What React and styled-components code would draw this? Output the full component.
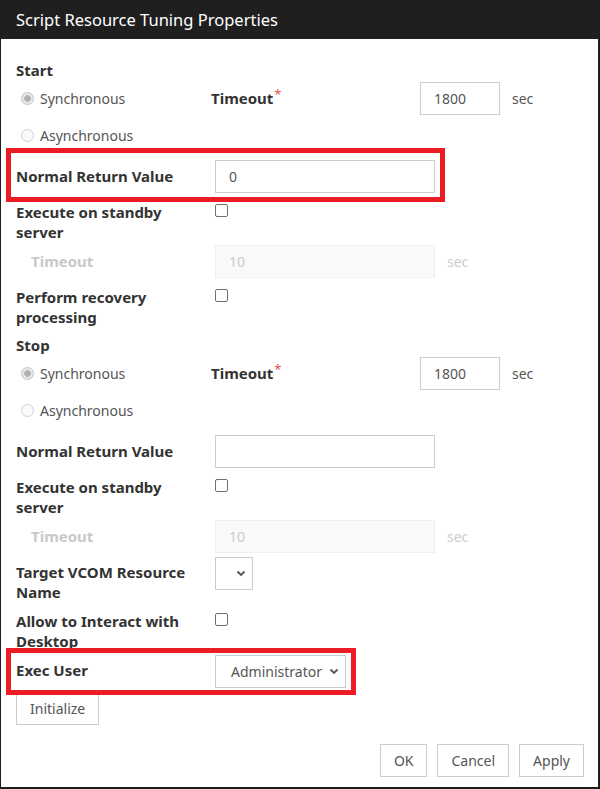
import React from 'react';
import styled, {createGlobalStyle} from "styled-components";

const GlobalStyle = createGlobalStyle`
  html, body {
    margin: 0;
    padding: 0;
    background: #ffffff;
  }
  body {
    font-family: "Noto Sans", "Open Sans", Arial, sans-serif;
    font-size: 14px;
    color: #555555;
  }
`;

const Chevron = () => (
    <svg width="10" height="7" viewBox="0 0 10 7">
        <path d="M1.5 1.5 L5 5 L8.5 1.5" fill="none" stroke="#555" strokeWidth="1.8"/>
    </svg>
);

const Radio = ({checked, label}) => (
    <RadioCell>
        <RadioDot checked={checked}/>
        <RadioText>{label}</RadioText>
    </RadioCell>
);

const StartStop = ({title}) => (
    <>
        <SectionHeading>{title}</SectionHeading>
        <RadioRow>
            <Radio checked label="Synchronous"/>
            <TimeoutLabel>Timeout<Required>*</Required></TimeoutLabel>
            <TextInput width={80} defaultValue="1800"/>
            <Unit>sec</Unit>
        </RadioRow>
        <RadioRow tall>
            <Radio label="Asynchronous"/>
        </RadioRow>
    </>
);

const App = () => {
    return (
        <Dialog>
            <GlobalStyle/>
            <TitleBar>Script Resource Tuning Properties</TitleBar>
            <Body>
                <StartStop title="Start"/>
                <FormRow>
                    <Highlight top={-12} left={-10} width={439} height={54}/>
                    <Label>Normal Return Value</Label>
                    <TextInput width={220} defaultValue="0"/>
                </FormRow>
                <FormRow>
                    <Label>Execute on standby server</Label>
                    <CheckBox/>
                </FormRow>
                <FormRow>
                    <Label disabled indent>Timeout</Label>
                    <TextInput width={220} defaultValue="10" disabled/>
                    <Unit disabled>sec</Unit>
                </FormRow>
                <FormRow>
                    <Label>Perform recovery processing</Label>
                    <CheckBox/>
                </FormRow>

                <StartStop title="Stop"/>
                <FormRow>
                    <Label>Normal Return Value</Label>
                    <TextInput width={220} defaultValue=""/>
                </FormRow>
                <FormRow>
                    <Label>Execute on standby server</Label>
                    <CheckBox/>
                </FormRow>
                <FormRow>
                    <Label disabled indent>Timeout</Label>
                    <TextInput width={220} defaultValue="10" disabled/>
                    <Unit disabled>sec</Unit>
                </FormRow>
                <FormRow>
                    <Label>Target VCOM Resource Name</Label>
                    <SelectBox width={38}>
                        <Chevron/>
                    </SelectBox>
                </FormRow>
                <FormRow>
                    <Label>Allow to Interact with Desktop</Label>
                    <CheckBox/>
                </FormRow>
                <FormRow>
                    <Highlight top={-6} left={-10} width={350} height={47}/>
                    <Label>Exec User</Label>
                    <SelectBox width={131}>
                        <span>Administrator</span>
                        <Chevron/>
                    </SelectBox>
                </FormRow>
                <InitRow>
                    <Button>Initialize</Button>
                </InitRow>
            </Body>
            <Footer>
                <Button>OK</Button>
                <Button>Cancel</Button>
                <Button>Apply</Button>
            </Footer>
        </Dialog>
    );
};

const Dialog = styled.div`
  width: 600px;
  height: 789px;
  box-sizing: border-box;
  border: 1px solid #1e1e1e;
  border-width: 0 2px 2px 1px;
  display: flex;
  flex-direction: column;
  background: #ffffff;
`;

const TitleBar = styled.div`
  height: 39px;
  line-height: 39px;
  background: #1f1f1f;
  color: #ffffff;
  font-size: 16.5px;
  padding-left: 15px;
  margin-right: -2px;
`;

const Body = styled.div`
  padding: 16px 15px 0 15px;
`;

const SectionHeading = styled.div`
  font-weight: bold;
  font-size: 15px;
  color: #333333;
  line-height: 20px;
  padding: 5px 0 2px;
`;

const RadioRow = styled.div`
  display: flex;
  align-items: flex-start;
  min-height: 33px;
  padding-top: ${p => p.tall ? 1 : 0}px;
  padding-bottom: ${p => p.tall ? 5 : 0}px;
  margin-bottom: 3px;
`;

const RadioCell = styled.div`
  width: 195px;
  display: flex;
  align-items: center;
  height: 33px;
  padding-left: 5px;
  box-sizing: border-box;
`;

const RadioDot = styled.span`
  width: 13px;
  height: 13px;
  box-sizing: border-box;
  border-radius: 50%;
  border: 1px solid ${p => p.checked ? '#c4c4c4' : '#d0d0d0'};
  background: ${p => p.checked ? 'radial-gradient(circle, #b0b0b0 0 3px, #e6e6e6 3.5px)' : '#fafafa'};
  margin-right: 6px;
  flex-shrink: 0;
`;

const RadioText = styled.span`
  color: #555555;
  line-height: 20px;
`;

const TimeoutLabel = styled.div`
  width: 209px;
  font-weight: bold;
  font-size: 15px;
  color: #333333;
  line-height: 20px;
  padding-top: 6px;
`;

const Required = styled.sup`
  color: #d9534f;
  font-weight: normal;
  font-size: 13px;
  vertical-align: top;
  position: relative;
  top: -4px;
  margin-left: 1px;
`;

const FormRow = styled.div`
  position: relative;
  display: flex;
  align-items: flex-start;
  min-height: 33px;
  margin-bottom: 3px;
`;

const Label = styled.div`
  width: 199px;
  padding: 6px 12px 0 ${p => p.indent ? 15 : 0}px;
  box-sizing: border-box;
  font-weight: bold;
  font-size: 15px;
  line-height: 20px;
  color: ${p => p.disabled ? '#c9c9c9' : '#333333'};
  flex-shrink: 0;
`;

const TextInput = styled.input`
  width: ${p => p.width}px;
  height: 33px;
  box-sizing: border-box;
  border: 1px solid ${p => p.disabled ? '#efefef' : '#cccccc'};
  background: ${p => p.disabled ? '#f9f9f9' : '#ffffff'};
  color: ${p => p.disabled ? '#cccccc' : '#555555'};
  padding: 0 13px;
  font-family: inherit;
  font-size: 14px;
  outline: none;
  margin: 0;
  flex-shrink: 0;
`;

const Unit = styled.span`
  margin-left: 12px;
  line-height: 33px;
  color: ${p => p.disabled ? '#cccccc' : '#555555'};
`;

const CheckBox = styled.span`
  width: 13px;
  height: 13px;
  box-sizing: border-box;
  border: 1px solid #707070;
  border-radius: 2px;
  margin-top: 8px;
  background: #ffffff;
`;

const SelectBox = styled.div`
  width: ${p => p.width}px;
  height: 33px;
  box-sizing: border-box;
  border: 1px solid #cccccc;
  display: flex;
  align-items: center;
  justify-content: flex-end;
  gap: 7px;
  padding-right: 6px;
  color: #555555;
  flex-shrink: 0;
  margin-top: 1px;
  white-space: nowrap;
  svg {
    flex-shrink: 0;
  }
`;

const Highlight = styled.div`
  position: absolute;
  top: ${p => p.top}px;
  left: ${p => p.left}px;
  width: ${p => p.width}px;
  height: ${p => p.height}px;
  box-sizing: border-box;
  border: 5px solid #ec1c24;
  pointer-events: none;
`;

const InitRow = styled.div`
  display: flex;
  margin-top: 4px;
`;

const Button = styled.button`
  height: 33px;
  padding: 0 13px;
  border: 1px solid #cccccc;
  background: #ffffff;
  color: #555555;
  font-family: inherit;
  font-size: 14px;
  border-radius: 0;
  cursor: pointer;
`;

const Footer = styled.div`
  margin-top: auto;
  display: flex;
  justify-content: flex-end;
  gap: 10px;
  padding: 0 14px 10px 0;
`;

export default App;
